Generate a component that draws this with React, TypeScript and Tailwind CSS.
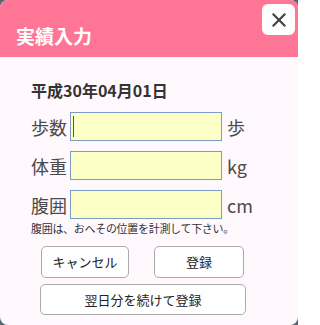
import React from "react";

const font = { fontFamily: '"Noto Sans CJK JP", "Noto Sans", sans-serif' };

function Row({ label, unit, caret }: { label: string; unit: string; caret?: boolean }) {
  return (
    <div className="flex items-center h-[29px]">
      <div className="w-[39px] text-[18px] leading-none text-[#4a4a4a]">{label}</div>
      <div className="relative w-[152px] h-[29px] border border-[#7b9cc4] bg-[#fcffc6]">
        {caret && <div className="absolute left-[2px] top-[3px] w-px h-[21px] bg-[#555]" />}
      </div>
      <div className="ml-[5px] text-[18px] leading-none text-[#4a4a4a]">{unit}</div>
    </div>
  );
}

export default function App() {
  return (
    <div className="w-[298px] h-[325px] bg-[#56686e]" style={font}>
      <div className="w-full h-full rounded-[8px] overflow-hidden bg-[#fff8fd] flex flex-col">
        <div className="relative h-[57px] bg-[#ff7596] shrink-0">
          <div className="absolute left-[16px] top-[24px] text-[19px] font-bold leading-[24px] text-white">
            実績入力
          </div>
          <button className="absolute right-[3px] top-[4px] w-[33px] h-[31px] rounded-[6px] bg-white flex items-center justify-center">
            <svg width="14" height="14" viewBox="0 0 14 14">
              <path d="M1.5 1.5 L12.5 12.5 M12.5 1.5 L1.5 12.5" stroke="#444" strokeWidth="2.2" strokeLinecap="square" />
            </svg>
          </button>
        </div>
        <div className="pl-[31px] pt-[23px]">
          <div className="text-[16px] font-bold leading-[20px] text-[#333]">平成30年04月01日</div>
          <div className="mt-[12px] flex flex-col gap-[10px]">
            <Row label="歩数" unit="歩" caret />
            <Row label="体重" unit="kg" />
            <Row label="腹囲" unit="cm" />
          </div>
          <div className="mt-[2px] text-[11px] tracking-[-0.3px] leading-[15px] text-[#333]">
            腹囲は、おへその位置を計測して下さい。
          </div>
          <div className="mt-[10px] ml-[10px] flex gap-[25px]">
            <button className="w-[88px] h-[32px] rounded-[5px] border border-[#aaa] bg-white text-[13px] text-[#222]">
              キャンセル
            </button>
            <button className="w-[90px] h-[32px] rounded-[5px] border border-[#aaa] bg-white text-[13px] text-[#222]">
              登録
            </button>
          </div>
          <div className="mt-[6px] ml-[9px]">
            <button className="w-[206px] h-[31px] rounded-[5px] border border-[#aaa] bg-white text-[13px] text-[#222]">
              翌日分を続けて登録
            </button>
          </div>
        </div>
      </div>
    </div>
  );
}
